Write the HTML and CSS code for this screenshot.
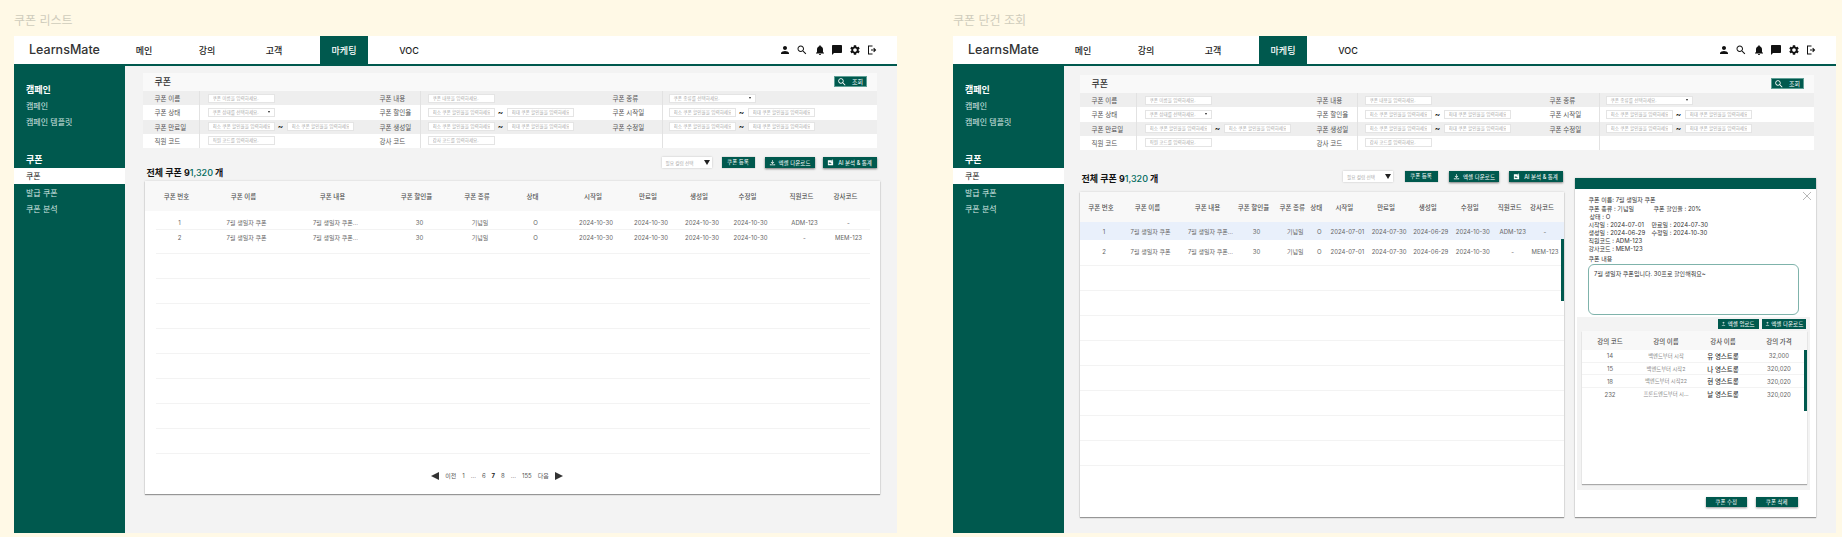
FILE: index.html
```html
<!DOCTYPE html>
<html lang="ko">
<head>
    <meta charset="UTF-8">
    <meta name="viewport" content="width=device-width, initial-scale=1.0">
    <title>LearnsMate 쿠폰</title>
    <link rel="stylesheet" href="styles.css">
</head>
<body>
    <svg class="icon-defs">
        <symbol id="i-person" viewBox="0 0 24 24"><path d="M12 12c2.21 0 4-1.79 4-4s-1.79-4-4-4-4 1.79-4 4 1.79 4 4 4zm0 2c-2.67 0-8 1.34-8 4v2h16v-2c0-2.66-5.33-4-8-4z"/></symbol>
        <symbol id="i-search" viewBox="0 0 24 24"><path d="M15.5 14h-.79l-.28-.27C15.41 12.59 16 11.11 16 9.5 16 5.91 13.09 3 9.5 3S3 5.91 3 9.5 5.91 16 9.5 16c1.61 0 3.09-.59 4.23-1.57l.27.28v.79l5 4.99L20.49 19l-4.99-5zm-6 0C7.01 14 5 11.99 5 9.5S7.01 5 9.5 5 14 7.01 14 9.5 11.99 14 9.5 14z"/></symbol>
        <symbol id="i-bell" viewBox="0 0 24 24"><path d="M12 22c1.1 0 2-.9 2-2h-4c0 1.1.89 2 2 2zm6-6v-5c0-3.07-1.64-5.64-4.5-6.32V4c0-.83-.67-1.5-1.5-1.5s-1.5.67-1.5 1.5v.68C7.63 5.36 6 7.92 6 11v5l-2 2v1h16v-1l-2-2z"/></symbol>
        <symbol id="i-chat" viewBox="0 0 24 24"><path d="M20 2H4c-1.1 0-1.99.9-1.99 2L2 22l4-4h14c1.1 0 2-.9 2-2V4c0-1.1-.9-2-2-2z"/></symbol>
        <symbol id="i-gear" viewBox="0 0 24 24"><path d="M19.14 12.94c.04-.3.06-.61.06-.94 0-.32-.02-.64-.07-.94l2.03-1.58c.18-.14.23-.41.12-.61l-1.92-3.32c-.12-.22-.37-.29-.59-.22l-2.39.96c-.5-.38-1.03-.7-1.62-.94l-.36-2.54c-.04-.24-.24-.41-.48-.41h-3.84c-.24 0-.43.17-.47.41l-.36 2.54c-.59.24-1.13.57-1.62.94l-2.39-.96c-.22-.08-.47 0-.59.22L2.74 8.87c-.12.21-.08.47.12.61l2.03 1.58c-.05.3-.09.63-.09.94s.02.64.07.94l-2.03 1.58c-.18.14-.23.41-.12.61l1.92 3.32c.12.22.37.29.59.22l2.39-.96c.5.38 1.03.7 1.62.94l.36 2.54c.05.24.24.41.48.41h3.84c.24 0 .44-.17.47-.41l.36-2.54c.59-.24 1.13-.56 1.62-.94l2.39.96c.22.08.47 0 .59-.22l1.92-3.32c.12-.22.07-.47-.12-.61l-2.01-1.58zM12 15.6c-1.98 0-3.6-1.62-3.6-3.6s1.62-3.6 3.6-3.6 3.6 1.62 3.6 3.6-1.62 3.6-3.6 3.6z"/></symbol>
        <symbol id="i-logout" viewBox="0 0 24 24"><path d="M4 3h9v2H6v14h7v2H4zM16 7.5l4.5 4.5-4.5 4.5-1.4-1.4 2.1-2.1H10v-2h6.7l-2.1-2.1z"/></symbol>
        <symbol id="i-download" viewBox="0 0 24 24"><path d="M11 3h2v10l3.5-3.5 1.4 1.4L12 16.8l-5.9-5.9 1.4-1.4L11 13zM3 18h2v1h14v-1h2v3H3z"/></symbol>
        <symbol id="i-upload" viewBox="0 0 24 24"><path d="M11 17V7l-3.5 3.5-1.4-1.4L12 3.2l5.9 5.9-1.4 1.4L13 7v10zM4 19h16v2H4z"/></symbol>
        <symbol id="i-note" viewBox="0 0 24 24"><path d="M3 4h12v4h6v13H3zM6 10v2h6v-2zm0 4v2h9v-2zM17 2h2v2h2v2h-2v2h-2V6h-2V4h2z"/></symbol>
    </svg>

    <div class="page">
        <!-- 쿠폰 리스트 -->
        <section class="board">
            <p class="caption">쿠폰 리스트</p>
            <div class="screen">
                <header class="topbar">
                    <div class="logo">LearnsMate</div>
                    <nav class="nav">
                        <a href="#" class="nav-main">메인</a>
                        <a href="#" class="nav-lecture">강의</a>
                        <a href="#" class="nav-client">고객</a>
                        <a href="#" class="nav-active">마케팅</a>
                        <a href="#" class="nav-voc">VOC</a>
                    </nav>
                    <div class="top-icons">
                        <svg class="top-icon"><use href="#i-person"/></svg>
                        <svg class="top-icon"><use href="#i-search"/></svg>
                        <svg class="top-icon"><use href="#i-bell"/></svg>
                        <svg class="top-icon"><use href="#i-chat"/></svg>
                        <svg class="top-icon"><use href="#i-gear"/></svg>
                        <svg class="top-icon"><use href="#i-logout"/></svg>
                    </div>
                </header>
                <div class="body-row">
                    <aside class="sidebar">
                        <h3 class="side-title">캠페인</h3>
                        <a href="#" class="side-link">캠페인</a>
                        <a href="#" class="side-link">캠페인 템플릿</a>
                        <h3 class="side-title side-title-next">쿠폰</h3>
                        <a href="#" class="side-active">쿠폰</a>
                        <a href="#" class="side-link side-after">발급 쿠폰</a>
                        <a href="#" class="side-link">쿠폰 분석</a>
                    </aside>
                    <main class="content content-list">
                        <div class="search-card">
                            <div class="search-head">
                                <h2>쿠폰</h2>
                                <button class="btn btn-search"><svg class="btn-icon-lg"><use href="#i-search"/></svg>조회</button>
                            </div>
                            <div class="search-row">
                                <div class="label label-first">쿠폰 이름</div>
                                <div class="cell"><input class="field" placeholder="쿠폰 이름을 입력하세요."></div>
                                <div class="label label-mid">쿠폰 내용</div>
                                <div class="cell cell-mid"><input class="field" placeholder="쿠폰 내용을 입력하세요."></div>
                                <div class="label">쿠폰 종류</div>
                                <div class="cell cell-last"><div class="field-select field-wide">쿠폰 종류를 선택하세요.<i></i></div></div>
                            </div>
                            <div class="search-row">
                                <div class="label label-first">쿠폰 상태</div>
                                <div class="cell"><div class="field-select">쿠폰 상태를 선택하세요.<i></i></div></div>
                                <div class="label label-mid">쿠폰 할인율</div>
                                <div class="cell cell-mid"><input class="field" placeholder="최소 쿠폰 할인율을 입력하세요."><span class="tilde">~</span><input class="field" placeholder="최대 쿠폰 할인율을 입력하세요."></div>
                                <div class="label">쿠폰 시작일</div>
                                <div class="cell cell-last"><input class="field" placeholder="최소 쿠폰 할인율을 입력하세요."><span class="tilde">~</span><input class="field" placeholder="최대 쿠폰 할인율을 입력하세요."></div>
                            </div>
                            <div class="search-row">
                                <div class="label label-first">쿠폰 만료일</div>
                                <div class="cell"><input class="field" placeholder="최소 쿠폰 할인율을 입력하세요."><span class="tilde">~</span><input class="field" placeholder="최소 쿠폰 할인율을 입력하세요."></div>
                                <div class="label label-mid">쿠폰 생성일</div>
                                <div class="cell cell-mid"><input class="field" placeholder="최소 쿠폰 할인율을 입력하세요."><span class="tilde">~</span><input class="field" placeholder="최대 쿠폰 할인율을 입력하세요."></div>
                                <div class="label">쿠폰 수정일</div>
                                <div class="cell cell-last"><input class="field" placeholder="최소 쿠폰 할인율을 입력하세요."><span class="tilde">~</span><input class="field" placeholder="최대 쿠폰 할인율을 입력하세요."></div>
                            </div>
                            <div class="search-row">
                                <div class="label label-first">직원 코드</div>
                                <div class="cell"><input class="field" placeholder="직원 코드를 입력하세요."></div>
                                <div class="label label-mid">강사 코드</div>
                                <div class="cell cell-mid"><input class="field" placeholder="강사 코드를 입력하세요."></div>
                                <div class="label"></div>
                                <div class="cell cell-last"></div>
                            </div>
                        </div>

                        <div class="toolbar toolbar-list">
                            <div class="total">전체 쿠폰 9<span class="total-num">1,320</span> 개</div>
                            <div class="actions">
                                <div class="column-select">필요 컬럼 선택<i></i></div>
                                <button class="btn btn-plain">쿠폰 등록</button>
                                <button class="btn btn-excel"><svg class="btn-icon"><use href="#i-download"/></svg>엑셀 다운로드</button>
                                <button class="btn btn-ai"><svg class="btn-icon"><use href="#i-note"/></svg>AI 분석 &amp; 통계</button>
                            </div>
                        </div>

                        <div class="table-card table-wide">
                            <div class="grid-row table-head">
                                <div>쿠폰 번호</div><div>쿠폰 이름</div><div>쿠폰 내용</div><div>쿠폰 할인율</div><div>쿠폰 종류</div><div>상태</div><div>시작일</div><div>만료일</div><div>생성일</div><div>수정일</div><div>직원코드</div><div>강사코드</div>
                            </div>
                            <div class="grid-row table-row row-one">
                                <div>1</div><div>7월 생일자 쿠폰</div><div>7월 생일자 쿠폰...</div><div>30</div><div>기념일</div><div>O</div><div>2024-10-30</div><div>2024-10-30</div><div>2024-10-30</div><div>2024-10-30</div><div>ADM-123</div><div>-</div>
                            </div>
                            <div class="grid-row table-row row-two">
                                <div>2</div><div>7월 생일자 쿠폰</div><div>7월 생일자 쿠폰...</div><div>30</div><div>기념일</div><div>O</div><div>2024-10-30</div><div>2024-10-30</div><div>2024-10-30</div><div>2024-10-30</div><div>-</div><div>MEM-123</div>
                            </div>
                            <div class="row-empty"></div><div class="row-empty"></div><div class="row-empty"></div><div class="row-empty"></div>
                            <div class="row-empty"></div><div class="row-empty"></div><div class="row-empty"></div><div class="row-empty"></div>
                            <div class="pager">
                                <svg class="pager-arrow" viewBox="0 0 8 8"><polygon points="8,0 8,8 0,4"/></svg>
                                <a href="#">이전</a><a href="#">1</a><span>...</span><a href="#">6</a><a href="#" class="pager-now">7</a><a href="#">8</a><span>...</span><a href="#">155</a><a href="#">다음</a>
                                <svg class="pager-arrow" viewBox="0 0 8 8"><polygon points="0,0 8,4 0,8"/></svg>
                            </div>
                        </div>
                    </main>
                </div>
            </div>
        </section>

        <!-- 쿠폰 단건 조회 -->
        <section class="board">
            <p class="caption">쿠폰 단건 조회</p>
            <div class="screen">
                <header class="topbar">
                    <div class="logo">LearnsMate</div>
                    <nav class="nav">
                        <a href="#" class="nav-main">메인</a>
                        <a href="#" class="nav-lecture">강의</a>
                        <a href="#" class="nav-client">고객</a>
                        <a href="#" class="nav-active">마케팅</a>
                        <a href="#" class="nav-voc">VOC</a>
                    </nav>
                    <div class="top-icons">
                        <svg class="top-icon"><use href="#i-person"/></svg>
                        <svg class="top-icon"><use href="#i-search"/></svg>
                        <svg class="top-icon"><use href="#i-bell"/></svg>
                        <svg class="top-icon"><use href="#i-chat"/></svg>
                        <svg class="top-icon"><use href="#i-gear"/></svg>
                        <svg class="top-icon"><use href="#i-logout"/></svg>
                    </div>
                </header>
                <div class="body-row">
                    <aside class="sidebar">
                        <h3 class="side-title">캠페인</h3>
                        <a href="#" class="side-link">캠페인</a>
                        <a href="#" class="side-link">캠페인 템플릿</a>
                        <h3 class="side-title side-title-next">쿠폰</h3>
                        <a href="#" class="side-active">쿠폰</a>
                        <a href="#" class="side-link side-after">발급 쿠폰</a>
                        <a href="#" class="side-link">쿠폰 분석</a>
                    </aside>
                    <main class="content content-detail">
                        <div class="search-card">
                            <div class="search-head">
                                <h2>쿠폰</h2>
                                <button class="btn btn-search"><svg class="btn-icon-lg"><use href="#i-search"/></svg>조회</button>
                            </div>
                            <div class="search-row">
                                <div class="label label-first">쿠폰 이름</div>
                                <div class="cell"><input class="field" placeholder="쿠폰 이름을 입력하세요."></div>
                                <div class="label label-mid">쿠폰 내용</div>
                                <div class="cell cell-mid"><input class="field" placeholder="쿠폰 내용을 입력하세요."></div>
                                <div class="label">쿠폰 종류</div>
                                <div class="cell cell-last"><div class="field-select field-wide">쿠폰 종류를 선택하세요.<i></i></div></div>
                            </div>
                            <div class="search-row">
                                <div class="label label-first">쿠폰 상태</div>
                                <div class="cell"><div class="field-select">쿠폰 상태를 선택하세요.<i></i></div></div>
                                <div class="label label-mid">쿠폰 할인율</div>
                                <div class="cell cell-mid"><input class="field" placeholder="최소 쿠폰 할인율을 입력하세요."><span class="tilde">~</span><input class="field" placeholder="최대 쿠폰 할인율을 입력하세요."></div>
                                <div class="label">쿠폰 시작일</div>
                                <div class="cell cell-last"><input class="field" placeholder="최소 쿠폰 할인율을 입력하세요."><span class="tilde">~</span><input class="field" placeholder="최대 쿠폰 할인율을 입력하세요."></div>
                            </div>
                            <div class="search-row">
                                <div class="label label-first">쿠폰 만료일</div>
                                <div class="cell"><input class="field" placeholder="최소 쿠폰 할인율을 입력하세요."><span class="tilde">~</span><input class="field" placeholder="최소 쿠폰 할인율을 입력하세요."></div>
                                <div class="label label-mid">쿠폰 생성일</div>
                                <div class="cell cell-mid"><input class="field" placeholder="최소 쿠폰 할인율을 입력하세요."><span class="tilde">~</span><input class="field" placeholder="최대 쿠폰 할인율을 입력하세요."></div>
                                <div class="label">쿠폰 수정일</div>
                                <div class="cell cell-last"><input class="field" placeholder="최소 쿠폰 할인율을 입력하세요."><span class="tilde">~</span><input class="field" placeholder="최대 쿠폰 할인율을 입력하세요."></div>
                            </div>
                            <div class="search-row">
                                <div class="label label-first">직원 코드</div>
                                <div class="cell"><input class="field" placeholder="직원 코드를 입력하세요."></div>
                                <div class="label label-mid">강사 코드</div>
                                <div class="cell cell-mid"><input class="field" placeholder="강사 코드를 입력하세요."></div>
                                <div class="label"></div>
                                <div class="cell cell-last"></div>
                            </div>
                        </div>

                        <div class="detail-row">
                            <div class="detail-left">
                                <div class="toolbar toolbar-detail">
                                    <div class="total">전체 쿠폰 9<span class="total-num">1,320</span> 개</div>
                                    <div class="actions">
                                        <div class="column-select">필요 컬럼 선택<i></i></div>
                                        <button class="btn btn-plain">쿠폰 등록</button>
                                        <button class="btn btn-excel"><svg class="btn-icon"><use href="#i-download"/></svg>엑셀 다운로드</button>
                                        <button class="btn btn-ai"><svg class="btn-icon"><use href="#i-note"/></svg>AI 분석 &amp; 통계</button>
                                    </div>
                                </div>

                                <div class="table-card table-narrow">
                                    <div class="grid-row table-head">
                                        <div>쿠폰 번호</div><div>쿠폰 이름</div><div>쿠폰 내용</div><div>쿠폰 할인율</div><div>쿠폰 종류</div><div>상태</div><div>시작일</div><div>만료일</div><div>생성일</div><div>수정일</div><div>직원코드</div><div>강사코드</div>
                                    </div>
                                    <div class="grid-row table-row row-one row-selected">
                                        <div>1</div><div>7월 생일자 쿠폰</div><div>7월 생일자 쿠폰...</div><div>30</div><div>기념일</div><div>O</div><div>2024-07-01</div><div>2024-07-30</div><div>2024-06-29</div><div>2024-10-30</div><div>ADM-123</div><div>-</div>
                                    </div>
                                    <div class="grid-row table-row row-two">
                                        <div>2</div><div>7월 생일자 쿠폰</div><div>7월 생일자 쿠폰...</div><div>30</div><div>기념일</div><div>O</div><div>2024-07-01</div><div>2024-07-30</div><div>2024-06-29</div><div>2024-10-30</div><div>-</div><div>MEM-123</div>
                                    </div>
                                    <div class="row-empty"></div><div class="row-empty"></div><div class="row-empty"></div><div class="row-empty"></div>
                                    <div class="row-empty"></div><div class="row-empty"></div><div class="row-empty"></div><div class="row-empty"></div>
                                    <div class="scroll-thumb"></div>
                                </div>
                            </div>

                            <div class="panel">
                                <div class="panel-bar"></div>
                                <svg class="panel-close" viewBox="0 0 8 8"><path d="M0 0L8 8M8 0L0 8"/></svg>
                                <div class="info">
                                    <p>쿠폰 이름: 7월 생일자 쿠폰</p>
                                    <p class="info-gap"><span class="info-col-wide">쿠폰 종류 : 기념일</span>쿠폰 할인율 : 20%</p>
                                    <p class="info-state">상태 : O</p>
                                    <p><span class="info-col">시작일 : 2024-07-01</span>만료일 : 2024-07-30</p>
                                    <p><span class="info-col">생성일 : 2024-06-29</span>수정일 : 2024-10-30</p>
                                    <p>직원코드 : ADM-123</p>
                                    <p>강사코드 : MEM-123</p>
                                    <p class="info-title">쿠폰 내용</p>
                                </div>
                                <div class="memo">7월 생일자 쿠폰입니다. 30프로 할인해줘요~</div>
                                <div class="sub-area">
                                    <div class="sub-actions">
                                        <button class="btn btn-sub"><svg class="btn-icon-sm"><use href="#i-upload"/></svg>엑셀 업로드</button>
                                        <button class="btn btn-sub"><svg class="btn-icon-sm"><use href="#i-upload"/></svg>엑셀 다운로드</button>
                                    </div>
                                    <div class="sub-card">
                                        <div class="sub-head"><div>강의 코드</div><div>강의 이름</div><div>강사 이름</div><div>강의 가격</div></div>
                                        <div class="sub-row"><div>14</div><div class="sub-name">백엔드부터 시작</div><div class="sub-teacher">유 영스트롱</div><div>32,000</div></div>
                                        <div class="sub-row"><div>15</div><div class="sub-name">백엔드부터 시작2</div><div class="sub-teacher">나 영스트롱</div><div>320,020</div></div>
                                        <div class="sub-row"><div>18</div><div class="sub-name">백엔드부터 시작22</div><div class="sub-teacher">현 영스트롱</div><div>320,020</div></div>
                                        <div class="sub-row sub-row-last"><div>232</div><div class="sub-name">프론트엔드부터 시...</div><div class="sub-teacher">날 영스트롱</div><div>320,020</div></div>
                                        <div class="scroll-thumb scroll-thumb-sub"></div>
                                    </div>
                                </div>
                                <div class="panel-actions">
                                    <button class="btn btn-panel">쿠폰 수정</button>
                                    <button class="btn btn-panel">쿠폰 삭제</button>
                                </div>
                            </div>
                        </div>
                    </main>
                </div>
            </div>
        </section>
    </div>
</body>
</html>
```

FILE: styles.css
```css
* {
    box-sizing: border-box;
}
body {
    margin: 0;
    height: 537px;
    overflow: hidden;
    background-color: #fff9e6;
    color: #333;
    font-family: Inter, "Noto Sans CJK KR", sans-serif;
}
a {
    color: inherit;
    text-decoration: none;
}
p, h2, h3 {
    margin: 0;
}
.icon-defs {
    display: none;
}
.page {
    display: flex;
    gap: 56px;
    padding-left: 14px;
}
.board {
    width: 883px;
}
.caption {
    height: 36px;
    padding-top: 14px;
    font-size: 12px;
    line-height: 14px;
    color: #cfccbc;
}
.screen {
    display: flex;
    flex-direction: column;
    height: 497px;
    background-color: #f3f3f3;
}

/* top bar */
.topbar {
    display: flex;
    flex: none;
    align-items: stretch;
    height: 30px;
    background-color: #fff;
    border-bottom: 2px solid #00594e;
}
.logo {
    width: 99px;
    padding-left: 15px;
    font-size: 12.5px;
    font-weight: 500;
    line-height: 28px;
    color: #333;
}
.nav {
    display: flex;
    font-size: 9px;
    font-weight: 500;
    color: #222;
}
.nav a {
    display: flex;
    align-items: center;
    justify-content: center;
}
.nav-main {
    width: 62px;
}
.nav-lecture {
    width: 64px;
}
.nav-client {
    width: 70px;
}
.nav .nav-active {
    width: 48px;
    margin-left: 11px;
    background-color: #00594e;
    color: #fff;
}
.nav-voc {
    width: 82px;
}
.top-icons {
    display: flex;
    align-items: center;
    gap: 5.5px;
    margin-left: auto;
    padding-right: 19px;
}
.top-icon {
    width: 12px;
    height: 12px;
    fill: #111;
}

/* sidebar */
.body-row {
    display: flex;
    flex: 1;
    min-height: 0;
}
.sidebar {
    display: flex;
    flex: none;
    flex-direction: column;
    width: 110.5px;
    padding-top: 17.5px;
    background-color: #00594e;
    color: #fff;
}
.side-title {
    padding-left: 12px;
    font-size: 9px;
    font-weight: 700;
    line-height: 11px;
}
.side-title-next {
    margin-top: 27.5px;
}
.side-link {
    margin-top: 6px;
    padding-left: 12px;
    font-size: 8px;
    line-height: 10px;
    color: #d5e6e2;
}
.side-active {
    margin-top: 2.5px;
    padding-left: 12px;
    font-size: 8px;
    line-height: 16px;
    background-color: #fff;
    color: #222;
}
.side-after {
    margin-top: 4px;
}

/* search form */
.content {
    flex: 1;
    min-width: 0;
}
.content-list {
    padding: 7px 0 0 18px;
}
.content-detail {
    padding: 9px 0 0 16px;
}
.search-card {
    width: 734px;
    background-color: #fff;
}
.search-head {
    display: flex;
    justify-content: space-between;
    height: 18px;
    padding: 3px 10px 0 12px;
    background-color: #f9f9f9;
}
.search-head h2 {
    font-size: 9px;
    font-weight: 500;
    line-height: 12px;
    color: #333;
}
.search-row {
    display: grid;
    grid-template-columns: 57px 180px 41px 192px 50px 214px;
    height: 14.25px;
}
.search-row:nth-child(even) {
    background-color: #eee;
}
.label {
    display: flex;
    align-items: center;
    font-size: 6.5px;
    color: #555;
}
.label-first {
    padding-left: 12px;
    border-right: 1px solid #e2e2e2;
}
.label-mid {
    border-right: 1px solid #e2e2e2;
}
.cell {
    display: flex;
    align-items: center;
    padding-left: 8px;
}
.cell-mid {
    padding-left: 7px;
}
.cell-last {
    padding-left: 6px;
}
.label:nth-last-child(2) {
    border-right: 1px solid #e2e2e2;
}
.field,
.field-select {
    width: 67px;
    height: 9px;
    margin: 0;
    padding: 0 4px;
    border: 1px solid #e4e4e4;
    border-radius: 0;
    background-color: #fff;
    font-family: inherit;
    font-size: 4.6px;
    line-height: 7px;
    color: #aaa;
}
.field::placeholder {
    color: #aaa;
}
.field-select {
    display: flex;
    align-items: center;
    justify-content: space-between;
    white-space: nowrap;
}
.field-wide {
    width: 87px;
}
.field-select i {
    border-top: 2px solid #222;
    border-left: 1.5px solid transparent;
    border-right: 1.5px solid transparent;
}
.tilde {
    width: 12px;
    font-size: 8px;
    font-weight: 700;
    line-height: 9px;
    text-align: center;
    color: #222;
}

/* buttons */
.btn {
    display: flex;
    align-items: center;
    justify-content: center;
    padding: 0;
    border: none;
    background-color: #00594e;
    font-family: inherit;
    color: #fff;
    white-space: nowrap;
}
.btn-search {
    gap: 5px;
    width: 33px;
    height: 11px;
    font-size: 6px;
    border: 1px solid #5f9f95;
}
.btn-icon-lg {
    width: 10px;
    height: 10px;
    fill: #fff;
}
.btn-icon {
    width: 7px;
    height: 7px;
    fill: #fff;
}
.btn-icon-sm {
    width: 5px;
    height: 5px;
    fill: #fff;
}

/* toolbar */
.toolbar {
    display: flex;
    justify-content: space-between;
    width: 734px;
}
.toolbar-list {
    height: 33px;
    padding: 9px 0 0 4px;
}
.toolbar-detail {
    width: 484px;
    height: 21px;
    padding: 0 1px 0 2px;
}
.toolbar-list .total {
    padding-top: 10px;
}
.toolbar-detail .total {
    padding-top: 1.5px;
}
.total {
    font-size: 9px;
    font-weight: 700;
    line-height: 11px;
    color: #111;
}
.total-num {
    font-weight: 500;
    color: #00695c;
}
.actions {
    display: flex;
    align-items: flex-start;
    gap: 10px;
}
.toolbar-detail .actions {
    gap: 11.5px;
}
.column-select {
    display: flex;
    align-items: center;
    justify-content: space-between;
    width: 50px;
    height: 11px;
    padding: 0 2px 0 4px;
    background-color: #fff;
    box-shadow: 0 0 2px rgba(0, 0, 0, 0.2);
    font-size: 4.6px;
    color: #aaa;
}
.column-select i {
    border-top: 5px solid #222;
    border-left: 3px solid transparent;
    border-right: 3px solid transparent;
}
.btn-plain {
    width: 33px;
    height: 10.5px;
    font-size: 5.5px;
    box-shadow: 0 0 1px rgba(0, 0, 0, 0.4);
}
.btn-excel {
    gap: 3px;
    width: 50px;
    height: 11px;
    font-size: 5.5px;
    box-shadow: 0 1px 2px rgba(0, 0, 0, 0.5);
}
.btn-ai {
    gap: 4px;
    width: 54px;
    height: 11px;
    margin-left: -2px;
    font-size: 5.5px;
    box-shadow: 0 1px 2px rgba(0, 0, 0, 0.5);
}

/* tables */
.table-card {
    position: relative;
    background-color: #fff;
    box-shadow: 0 1px 1px rgba(0, 0, 0, 0.35), 0 0 2px rgba(0, 0, 0, 0.15);
}
.table-wide {
    width: 735px;
    height: 313px;
    margin-left: 2px;
}
.table-narrow {
    width: 484px;
    height: 325px;
}
.grid-row {
    display: grid;
}
.table-wide .grid-row {
    grid-template-columns: 48px 86px 92px 76px 45px 66px 55px 55px 47px 50px 58px 30px;
}
.table-narrow .grid-row {
    grid-template-columns: 21px 72px 48px 44px 33.5px 14.5px 41.75px 41.75px 41.5px 42.5px 37.5px 27px;
    padding-left: 14px;
}
.grid-row > div {
    display: flex;
    justify-content: center;
    white-space: nowrap;
}
.table-head {
    align-items: center;
    height: 30px;
    background-color: #f8f8f8;
    font-size: 6.5px;
    font-weight: 500;
    color: #555;
}
.table-head > div {
    padding-right: 6px;
}
.table-wide .table-head {
    padding-left: 11px;
}
.table-row {
    height: 25px;
    border-bottom: 1px solid #f3f3f3;
    font-size: 6px;
    line-height: 7px;
    color: #666;
}
.table-wide .table-row {
    margin: 0 10px 0 11px;
    padding-right: 6px;
}
.table-wide .row-one {
    height: 18.5px;
    padding-top: 7.5px;
}
.table-wide .row-two {
    height: 24.8px;
    padding-top: 4.5px;
}
.table-narrow .row-one {
    height: 18px;
    padding-top: 5.5px;
}
.table-narrow .row-two {
    height: 25.5px;
    padding-top: 8px;
}
.row-selected {
    background-color: #e9f0fb;
    border-bottom: none;
}
.row-empty {
    height: 25px;
    border-bottom: 1px solid #f3f3f3;
}
.table-wide .row-empty {
    margin: 0 10px 0 11px;
}
.scroll-thumb {
    position: absolute;
    top: 47px;
    right: 0;
    width: 3px;
    height: 62px;
    background-color: #00594e;
}

/* pager */
.pager {
    display: flex;
    align-items: center;
    justify-content: center;
    gap: 6px;
    height: 14px;
    margin-top: 14.5px;
    padding-right: 30px;
    font-size: 6px;
    color: #555;
}
.pager-now {
    font-weight: 700;
    color: #222;
}
.pager-arrow {
    width: 8px;
    height: 8px;
    fill: #333;
}

/* detail panel */
.detail-row {
    display: flex;
    gap: 11px;
    margin-top: 21px;
}
.detail-left {
    flex: none;
    width: 484px;
}
.panel {
    position: relative;
    flex: none;
    width: 241px;
    height: 339px;
    margin-top: 7px;
    background-color: #fff;
    box-shadow: 0 1px 1px rgba(0, 0, 0, 0.35), 0 0 2px rgba(0, 0, 0, 0.15);
}
.panel-bar {
    height: 11px;
    background-color: #00594e;
}
.panel-close {
    position: absolute;
    top: 14px;
    right: 4.5px;
    width: 8px;
    height: 8px;
    fill: none;
    stroke: #888;
    stroke-width: 0.6;
}
.info {
    padding: 7px 0 0 14px;
    font-size: 6px;
    line-height: 8px;
    color: #333;
}
.info-gap {
    margin-top: 1px;
}
.info-state {
    padding-left: 1px;
}
.info-col {
    display: inline-block;
    width: 63px;
}
.info-col-wide {
    display: inline-block;
    width: 65px;
}
.info-title {
    margin-top: 2px;
}
.memo {
    width: 211px;
    height: 51px;
    margin: 1px 0 0 13.5px;
    padding: 5px 5px;
    border: 1px solid #7fb3ab;
    border-radius: 6px;
    font-size: 6px;
    line-height: 8px;
    color: #333;
}
.sub-area {
    width: 233px;
    height: 173px;
    margin: 2px 0 0 2.5px;
    padding: 2px 4px 0 5px;
    background-color: #f3f3f3;
}
.sub-actions {
    display: flex;
    justify-content: flex-end;
    gap: 3.5px;
}
.btn-sub {
    gap: 1.5px;
    width: 41px;
    height: 9.5px;
    font-size: 5.5px;
}
.sub-actions .btn-sub:last-child {
    width: 44px;
}
.sub-card {
    position: relative;
    width: 224.5px;
    height: 153px;
    margin-top: 2.5px;
    background-color: #fff;
    box-shadow: 0 1px 1px rgba(0, 0, 0, 0.3);
}
.sub-head,
.sub-row {
    display: grid;
    grid-template-columns: 56px 56px 58px 54px;
}
.sub-head > div,
.sub-row > div {
    display: flex;
    justify-content: center;
    white-space: nowrap;
}
.sub-head {
    align-items: center;
    height: 19px;
    background-color: #f8f8f8;
    font-size: 6.5px;
    font-weight: 500;
    color: #555;
}
.sub-row {
    align-items: center;
    height: 12.7px;
    border-bottom: 1px solid #f3f3f3;
    font-size: 6px;
    color: #666;
}
.sub-row-last {
    border-bottom: none;
}
.sub-row .sub-name {
    font-size: 5.3px;
    color: #888;
}
.sub-row .sub-teacher {
    font-size: 6.5px;
    font-weight: 500;
    color: #333;
}
.scroll-thumb-sub {
    top: 19px;
    width: 2.5px;
    height: 61px;
}
.panel-actions {
    display: flex;
    justify-content: flex-end;
    gap: 9px;
    margin-top: 6.5px;
    padding-right: 18px;
}
.btn-panel {
    width: 41.5px;
    height: 10.5px;
    font-size: 5.5px;
    box-shadow: 0 1px 2px rgba(0, 0, 0, 0.4);
}
```
